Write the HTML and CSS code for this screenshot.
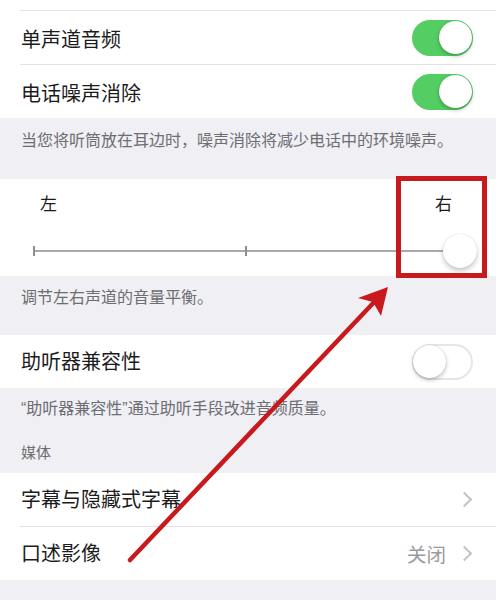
FILE: index.html
```html
<!DOCTYPE html>
<html lang="zh-CN">
<head>
    <meta charset="UTF-8">
    <meta name="viewport" content="width=device-width, initial-scale=1.0">
    <title>听觉</title>
    <link rel="stylesheet" href="styles.css">
</head>
<body>
<div class="group top">
    <div class="row-stub"></div>
    <div class="row">
        <span class="label">单声道音频</span>
        <span class="switch on"><span class="knob"></span></span>
    </div>
    <div class="row">
        <span class="label">电话噪声消除</span>
        <span class="switch on"><span class="knob"></span></span>
    </div>
</div>
<div class="footer f-noise">当您将听筒放在耳边时，噪声消除将减少电话中的环境噪声。</div>

<div class="group balance">
    <div class="balance-labels">
        <span>左</span>
        <span>右</span>
    </div>
    <div class="slider">
        <span class="track"></span>
        <span class="tick tick-left"></span>
        <span class="tick tick-mid"></span>
        <span class="thumb"></span>
    </div>
</div>
<div class="footer f-balance">调节左右声道的音量平衡。</div>

<div class="group">
    <div class="row first">
        <span class="label">助听器兼容性</span>
        <span class="switch"><span class="knob"></span></span>
    </div>
</div>
<div class="footer f-hearing">“助听器兼容性”通过助听手段改进音频质量。</div>
<div class="header">媒体</div>

<div class="group">
    <div class="row first">
        <span class="label">字幕与隐藏式字幕</span>
        <span class="detail"><span class="chevron"></span></span>
    </div>
    <div class="row">
        <span class="label">口述影像</span>
        <span class="detail">关闭<span class="chevron"></span></span>
    </div>
</div>

<!-- annotation drawn on top of the settings list -->
<div class="mark-box"></div>
<svg class="mark-arrow" width="496" height="600" viewBox="0 0 496 600">
    <line x1="130" y1="560" x2="378" y2="298" stroke="#c8191c" stroke-width="4.5" stroke-linecap="round"/>
    <polygon points="388,287 358,298 373,302 381,316" fill="#c8191c"/>
</svg>
</body>
</html>
```

FILE: styles.css
```css
body {
    margin: 0;
    width: 496px;
    height: 600px;
    overflow: hidden;
    background: #efeff4;
    font-family: "Liberation Sans", "Noto Sans CJK SC", sans-serif;
    color: #1c1c1c;
    position: relative;
}
.group {
    background: #fff;
}
.row-stub {
    height: 10px;
}
.row {
    height: 53px;
    margin-left: 20px;
    padding-right: 23px;
    border-top: 1px solid #e2e2e6;
    display: flex;
    align-items: center;
    justify-content: space-between;
}
.row.first {
    border-top: none;
}
.label {
    font-size: 20px;
    line-height: 24px;
    padding-left: 1px;
}
.top .label {
    padding-top: 4px;
}
.switch {
    width: 61px;
    height: 36px;
    border-radius: 18px;
    box-sizing: border-box;
    border: 2px solid #e6e6e8;
    background: #fff;
    display: flex;
    align-items: center;
    position: relative;
}
.switch .knob {
    width: 33px;
    height: 33px;
    border-radius: 50%;
    background: #fff;
    box-shadow: 0 2px 4px rgba(0, 0, 0, 0.25), 0 0 1px rgba(0, 0, 0, 0.2);
    margin-left: -1px;
}
.switch.on {
    background: #54ce62;
    border-color: #54ce62;
    justify-content: flex-end;
}
.switch.on .knob {
    margin-left: 0;
    margin-right: -1px;
}
.detail {
    display: flex;
    align-items: center;
    gap: 13px;
    font-size: 19.5px;
    color: #9a9a9e;
    margin-right: 1px;
}
.chevron {
    width: 9px;
    height: 9px;
    border-top: 2px solid #c4c4c8;
    border-right: 2px solid #c4c4c8;
    transform: rotate(45deg);
    margin-right: 2px;
}
.footer, .header {
    font-size: 16px;
    line-height: 20px;
    color: #6d6d72;
    padding-left: 21px;
}
.f-noise {
    padding-top: 13px;
    height: 48px;
}
.f-balance {
    padding-top: 12px;
    height: 47px;
}
.f-hearing {
    padding-top: 11px;
    height: 34px;
}
.header {
    font-size: 15px;
    line-height: 40px;
    height: 40px;
}
.balance {
    height: 97px;
    display: flex;
    flex-direction: column;
}
.balance-labels {
    display: flex;
    justify-content: space-between;
    padding: 16px 44px 0 40px;
    font-size: 17px;
    line-height: 20px;
}
.slider {
    margin: 19px 19px 0 33px;
    height: 34px;
    display: flex;
    align-items: center;
    justify-content: flex-end;
    position: relative;
}
.track {
    position: absolute;
    left: 0;
    right: 10px;
    top: 16px;
    height: 2px;
    background: #a9a9ad;
}
.tick {
    position: absolute;
    top: 12px;
    width: 2px;
    height: 10px;
    background: #8e8e92;
}
.tick-left {
    left: 0;
}
.tick-mid {
    left: 212px;
}
.thumb {
    width: 34px;
    height: 34px;
    border-radius: 50%;
    background: #fff;
    box-shadow: 0 3px 5px rgba(0, 0, 0, 0.22), 0 0 1px rgba(0, 0, 0, 0.2);
    position: relative;
}
.mark-box {
    position: absolute;
    left: 396px;
    top: 176px;
    width: 81px;
    height: 92px;
    border: 5px solid #c8191c;
}
.mark-arrow {
    position: absolute;
    left: 0;
    top: 0;
}
```
